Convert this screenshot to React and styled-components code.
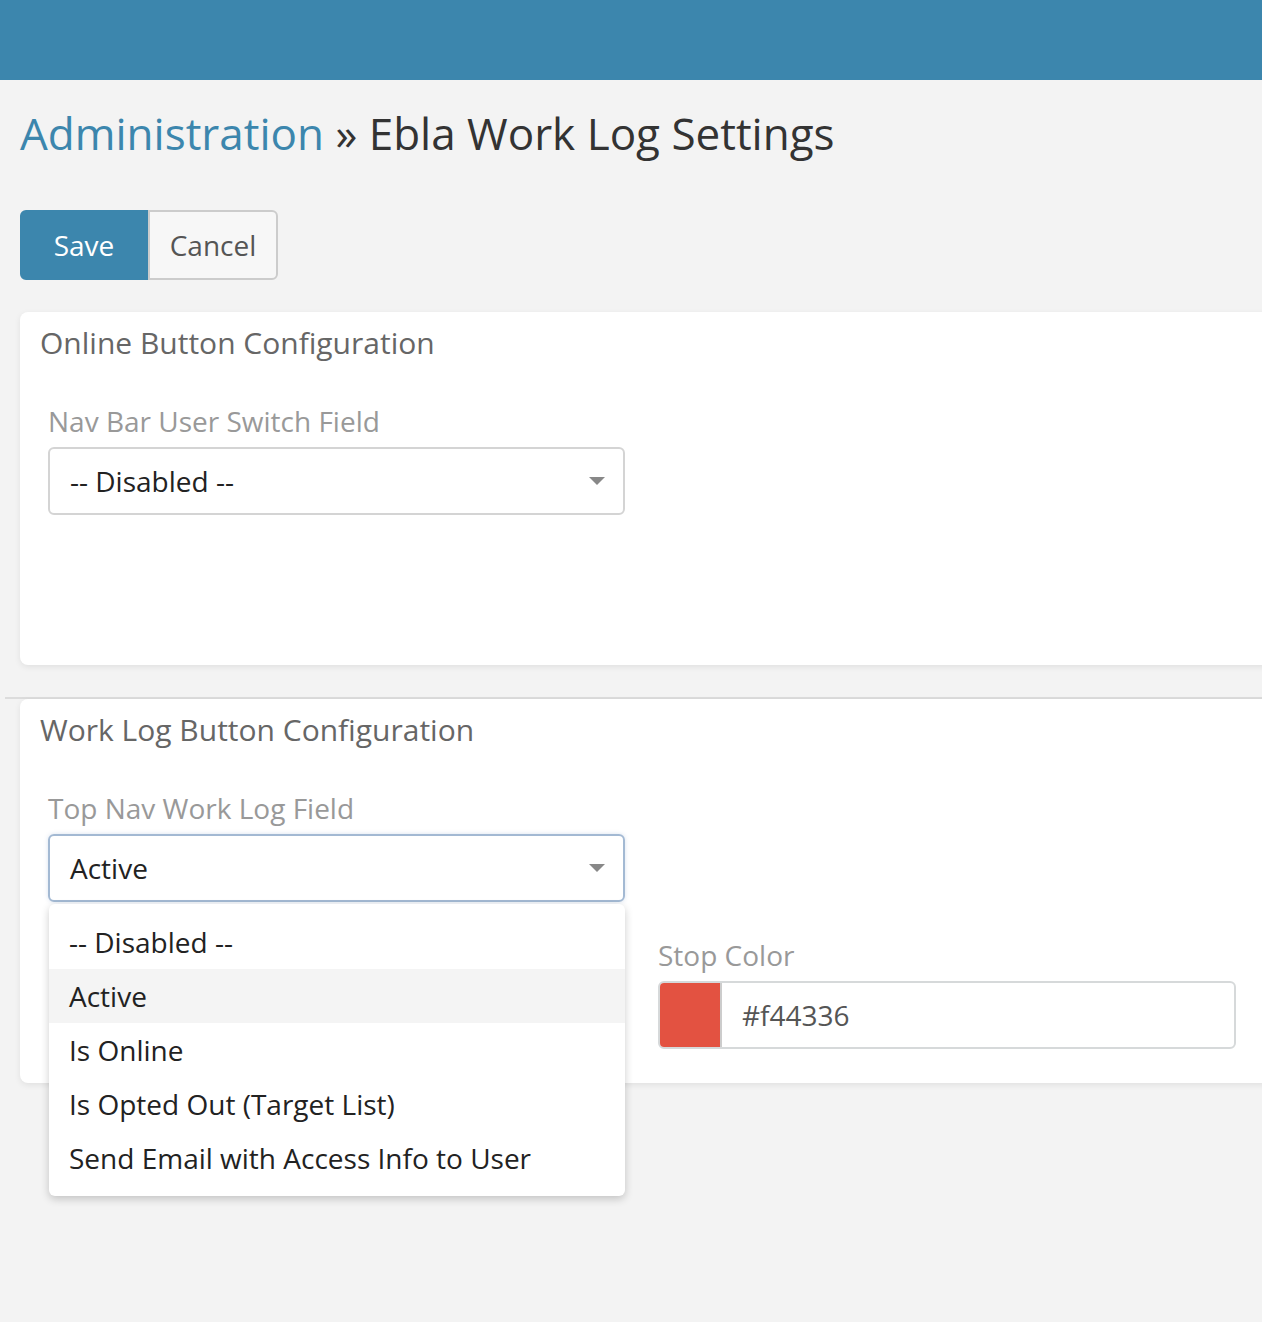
import styled, { createGlobalStyle } from 'styled-components';

const GlobalStyle = createGlobalStyle`
  body {
    margin: 0;
    padding: 0;
    background: #f3f3f3;
    font-family: "Open Sans", "Noto Sans", sans-serif;
  }
`;

const TopBar = styled.div`
  height: 80px;
  background: #3c86ad;
`;

const Page = styled.div`
  padding: 0 0 240px 20px;
  overflow-x: clip;
`;

const Title = styled.h1`
  margin: 23px 0 0;
  font-size: 44px;
  font-weight: 400;
  line-height: 60px;
  color: #333;

  a {
    color: #3c86ad;
    text-decoration: none;
  }
`;

const ButtonRow = styled.div`
  display: flex;
  margin: 47px 0 32px;
`;

const Button = styled.button`
  height: 70px;
  padding: 0;
  text-align: center;
  font-family: inherit;
  font-size: 28px;
  border: 2px solid ${({ $primary }) => ($primary ? '#3c86ad' : '#ccc')};
  background: ${({ $primary }) => ($primary ? '#3c86ad' : '#f7f7f7')};
  color: ${({ $primary }) => ($primary ? '#fff' : '#555')};
  border-radius: ${({ $primary }) => ($primary ? '6px 0 0 6px' : '0 6px 6px 0')};
  width: ${({ $primary }) => ($primary ? '128px' : '130px')};
`;

const Panel = styled.section`
  position: relative;
  width: 1250px;
  background: #fff;
  border-radius: 8px;
  box-shadow: 0 2px 6px rgba(0, 0, 0, 0.08);
  padding: 10px 28px 0;
  box-sizing: border-box;
  padding-bottom: ${({ $bottom }) => $bottom || '34px'};
`;

const PanelTitle = styled.h2`
  margin: 0 0 0 -8px;
  font-size: 30px;
  font-weight: 400;
  line-height: 42px;
  color: #666;
`;

const Grid = styled.div`
  display: grid;
  grid-template-columns: 577px 578px;
  column-gap: 33px;
  row-gap: 34px;
  margin-top: 38px;
`;

const Field = styled.div`
  position: relative;
  display: flex;
  flex-direction: column;
`;

const Label = styled.label`
  font-size: 28px;
  line-height: 38px;
  color: #999;
  margin-bottom: 7px;
`;

const Select = styled.div`
  height: 68px;
  box-sizing: border-box;
  border: 2px solid ${({ $focused }) => ($focused ? '#a3b9d3' : '#d4d4d4')};
  box-shadow: ${({ $focused }) => ($focused ? '0 0 4px rgba(102, 140, 190, 0.25)' : 'none')};
  border-radius: 6px;
  display: flex;
  align-items: center;
  justify-content: space-between;
  padding: 0 18px 0 20px;
  font-size: 28px;
  color: #222;
`;

const Caret = styled.span`
  width: 0;
  height: 0;
  border-left: 8px solid transparent;
  border-right: 8px solid transparent;
  border-top: 8px solid #888;
`;

const Menu = styled.ul`
  position: absolute;
  top: calc(100% + 2px);
  left: 1px;
  right: 0;
  margin: 0;
  padding: 11px 0;
  list-style: none;
  background: #fff;
  border-radius: 6px;
  box-shadow: 0 3px 8px rgba(0, 0, 0, 0.2);
  z-index: 5;
`;

const MenuItem = styled.li`
  height: 54px;
  display: flex;
  align-items: center;
  padding: 0 20px;
  font-size: 28px;
  color: #222;
  background: ${({ $active }) => ($active ? '#f4f4f4' : 'transparent')};
`;

const ColorInput = styled.div`
  height: 68px;
  box-sizing: border-box;
  border: 2px solid #d6d9da;
  border-radius: 6px;
  display: flex;
  align-items: center;
  overflow: hidden;
`;

const Swatch = styled.span`
  width: 60px;
  height: 100%;
  background: ${({ $color }) => $color};
  border-right: 2px solid #ccc;
`;

const ColorText = styled.span`
  padding-left: 20px;
  font-size: 28px;
  color: #555;
`;

const Divider = styled.hr`
  margin: 32px 0 0 -15px;
  border: 0;
  border-top: 2px solid #dcdcdc;
`;

const options = [
  '-- Disabled --',
  'Active',
  'Is Online',
  'Is Opted Out (Target List)',
  'Send Email with Access Info to User',
];

const App = () => (
  <>
    <GlobalStyle />
    <TopBar />
    <Page>
      <Title>
        <a href="#admin">Administration</a> » Ebla Work Log Settings
      </Title>

      <ButtonRow>
        <Button $primary>Save</Button>
        <Button>Cancel</Button>
      </ButtonRow>

      <Panel $bottom="150px">
        <PanelTitle>Online Button Configuration</PanelTitle>
        <Grid>
          <Field>
            <Label>Nav Bar User Switch Field</Label>
            <Select>
              -- Disabled --
              <Caret />
            </Select>
          </Field>
        </Grid>
      </Panel>

      <Divider />

      <Panel>
        <PanelTitle>Work Log Button Configuration</PanelTitle>
        <Grid>
          <Field>
            <Label>Top Nav Work Log Field</Label>
            <Select $focused>
              Active
              <Caret />
            </Select>
            <Menu>
              {options.map((o) => (
                <MenuItem key={o} $active={o === 'Active'}>
                  {o}
                </MenuItem>
              ))}
            </Menu>
          </Field>
          <div />
          <div />
          <Field>
            <Label>Stop Color</Label>
            <ColorInput>
              <Swatch $color="#e35241" />
              <ColorText>#f44336</ColorText>
            </ColorInput>
          </Field>
        </Grid>
      </Panel>
    </Page>
  </>
);

export default App;
